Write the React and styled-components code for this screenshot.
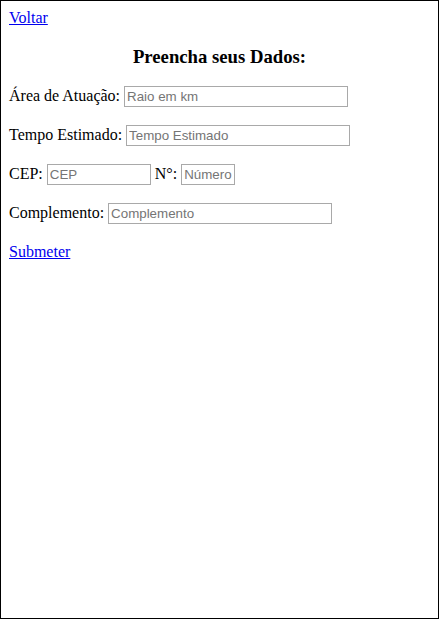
import React from 'react';
import styled, { createGlobalStyle } from 'styled-components';

const GlobalStyle = createGlobalStyle`
  html, body {
    margin: 0;
    padding: 0;
    background: #ffffff;
  }
  body {
    font-family: "Liberation Serif", "Times New Roman", serif;
    font-size: 16px;
    color: #000000;
  }
`;

const Page = styled.div`
  box-sizing: border-box;
  width: 439px;
  height: 619px;
  border: 1px solid #000000;
  padding: 8px;
  overflow: hidden;
`;

const Link = styled.a`
  color: #0000ee;
  text-decoration: underline;
  cursor: pointer;
`;

const Title = styled.h3`
  font-size: 18.72px;
  font-weight: bold;
  text-align: center;
  margin: 18.72px 0 16.5px;
`;

const Row = styled.p`
  margin: 16px 0;
  line-height: 23px;
`;

const Field = styled.input`
  box-sizing: border-box;
  width: ${(p) => p.$w}px;
  height: 21px;
  padding: 1px 2px;
  border: 1px solid #a9a9a9;
  font-family: "Liberation Sans", Arial, sans-serif;
  font-size: 13.333px;
  color: #000000;
  vertical-align: baseline;
  outline: none;
  &::placeholder {
    color: #757575;
  }
`;

export default function App() {
  return (
    <>
      <GlobalStyle />
      <Page>
        <Link href="#">Voltar</Link>
        <Title>Preencha seus Dados:</Title>
        <Row>
          Área de Atuação: <Field $w={224} placeholder="Raio em km" />
        </Row>
        <Row>
          Tempo Estimado: <Field $w={224} placeholder="Tempo Estimado" />
        </Row>
        <Row>
          CEP: <Field $w={104} placeholder="CEP" /> N°: <Field $w={54} placeholder="Número" />
        </Row>
        <Row>
          Complemento: <Field $w={224} placeholder="Complemento" />
        </Row>
        <Row>
          <Link href="#">Submeter</Link>
        </Row>
      </Page>
    </>
  );
}
